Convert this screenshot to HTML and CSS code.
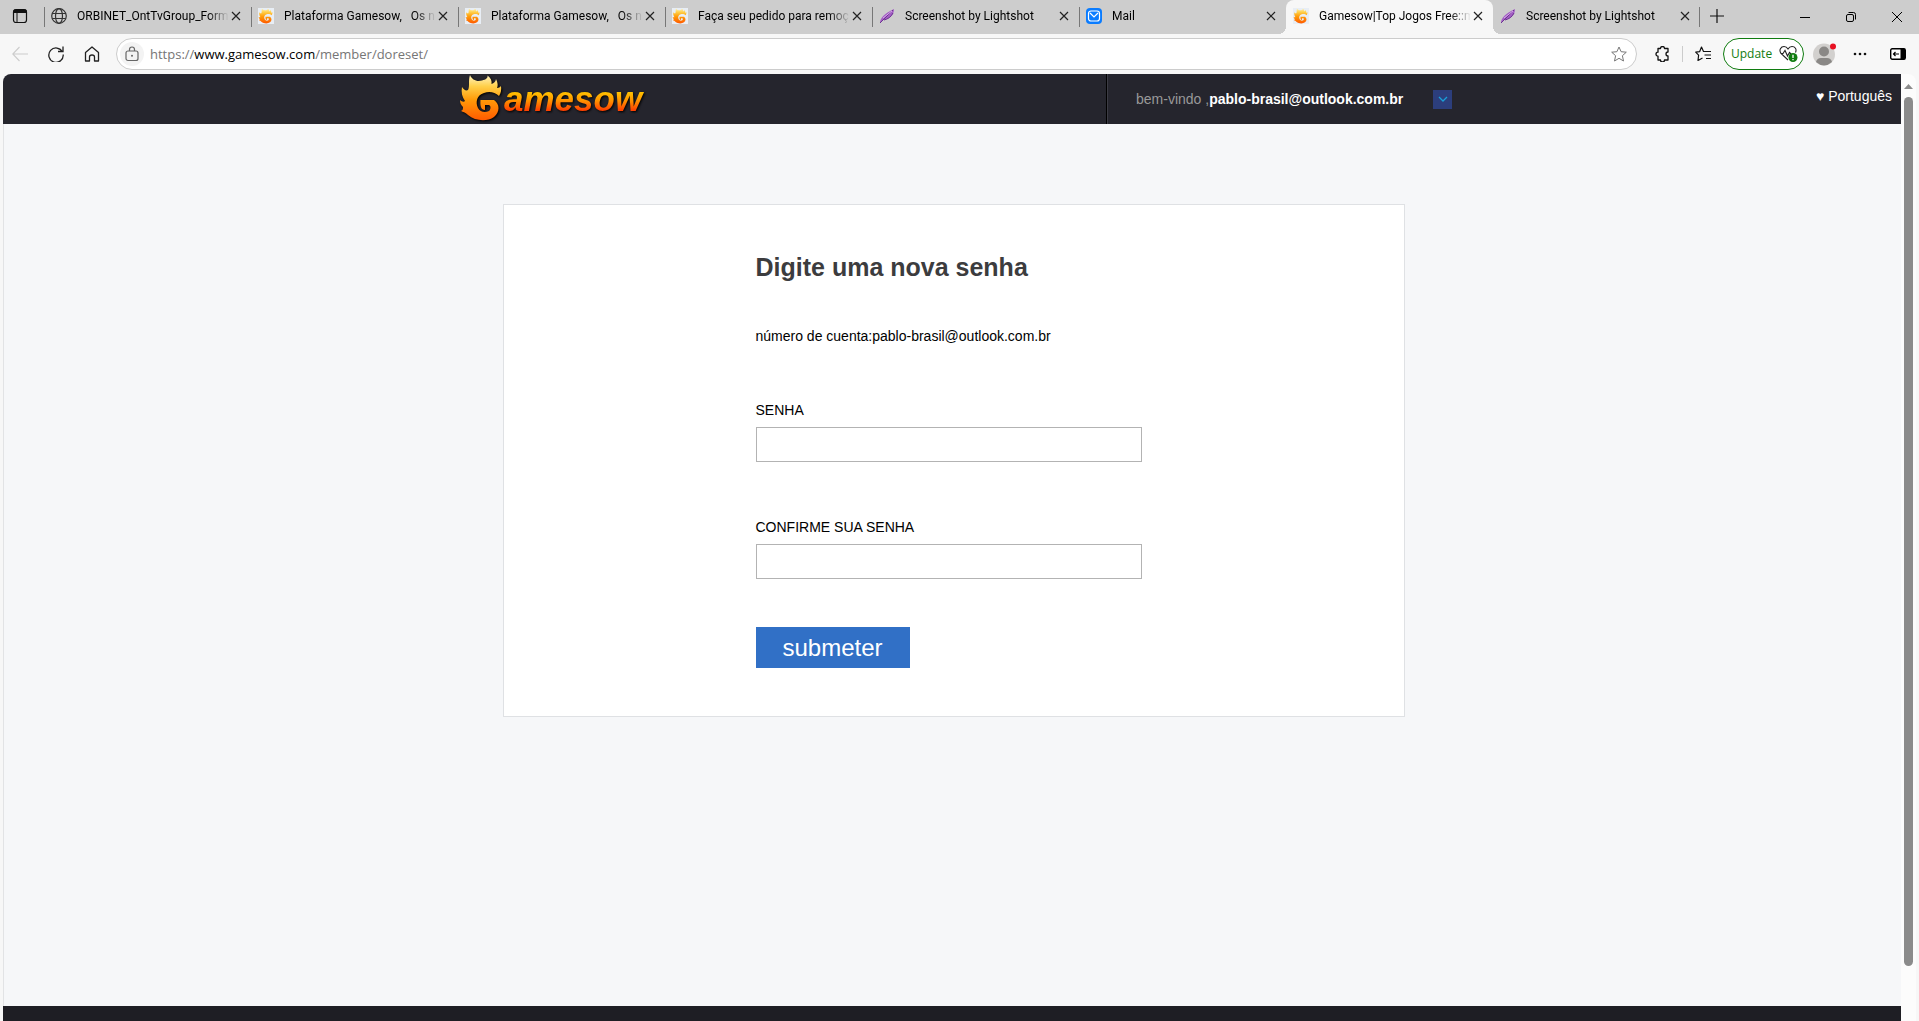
FILE: index.html
```html
<!DOCTYPE html>
<html lang="pt-BR">
<head>
    <meta charset="UTF-8">
    <meta name="viewport" content="width=device-width, initial-scale=1.0">
    <title>Gamesow|Top Jogos Free</title>
    <link rel="stylesheet" href="styles.css">
</head>
<body>
<!-- shared shapes -->
<svg class="defs" width="0" height="0">
    <defs>
        <linearGradient id="fire" x1="0" y1="0" x2="0" y2="1">
            <stop offset="0" stop-color="#fff3c0"/>
            <stop offset="0.25" stop-color="#ffd04a"/>
            <stop offset="0.55" stop-color="#ff9a08"/>
            <stop offset="1" stop-color="#ff5a00"/>
        </linearGradient>
    </defs>
    <symbol id="flame" viewBox="0 0 44 48">
        <path fill="url(#fire)" d="M10 1C12 6 17 8 22 6.500C26 5.500 28 4 27.500 1.500C31 4 32 7 31.500 10C34 9 35.500 8 36 5C38 9 38 12 37 14C39 14 40 13 41 12C41.500 16 41 19 39 22C35 18 29 17 24 19C17 21 15 28 18 34C20 38 25 39 29 37C31 35 31 32 29 31L25 31L25 36C21 36 20 32 20.500 26L34 26C40 30 40 38 34 43C27 48 15 47 8 41C5 38 3 38 1 37C3 36 3 35 3 33C1 31 0 29 0 26C2 28 4 28 5 27C2 23 1 18 2 13C4 16 6 17 8 16C10 12 8 7 10 1Z"/>
    </symbol>
    <symbol id="x" viewBox="0 0 10 10"><path d="M1 1L9 9M9 1L1 9" fill="none" stroke="#222" stroke-width="1.200"/></symbol>
    <symbol id="feather" viewBox="0 0 16 16">
        <path d="M1 15C1 10 5 6 15 1C15 8 10 11 4 12Z" fill="#a35fc4"/>
        <path d="M1 15L14 2M5 12C9 11 12 9 14 5" fill="none" stroke="#6d3391" stroke-width="1"/>
        <path d="M4 10L13 3" stroke="#d7a9ea" stroke-width="1"/>
    </symbol>
</svg>

<div class="tabs">
    <button class="tab-menu" aria-label="Tab actions">
        <svg width="16" height="16" viewBox="0 0 16 16"><rect x="1.500" y="1.500" width="13" height="13" rx="2.500" fill="none" stroke="#111" stroke-width="1.200"/><path d="M2 2H14V4.500H2ZM5 5V14" fill="#111" stroke="#111"/></svg>
    </button>
    <div class="tab">
        <svg class="fav" viewBox="0 0 16 16"><g fill="none" stroke="#333" stroke-width="1.200"><circle cx="8" cy="8" r="7.300"/><ellipse cx="8" cy="8" rx="3.500" ry="7.300"/><path d="M1.300 5.500H14.700M1.300 10.500H14.700"/></g></svg>
        <span class="title">ORBINET_OntTvGroup_Form</span>
        <button class="close" aria-label="Close"><svg><use href="#x"/></svg></button>
    </div>
    <div class="tab">
        <svg class="fav game"><use href="#flame"/></svg>
        <span class="title">Plataforma Gamesow, &nbsp; Os n</span>
        <button class="close" aria-label="Close"><svg><use href="#x"/></svg></button>
    </div>
    <div class="tab">
        <svg class="fav game"><use href="#flame"/></svg>
        <span class="title">Plataforma Gamesow, &nbsp; Os n</span>
        <button class="close" aria-label="Close"><svg><use href="#x"/></svg></button>
    </div>
    <div class="tab">
        <svg class="fav game"><use href="#flame"/></svg>
        <span class="title">Faça seu pedido para remoç</span>
        <button class="close" aria-label="Close"><svg><use href="#x"/></svg></button>
    </div>
    <div class="tab">
        <svg class="fav"><use href="#feather"/></svg>
        <span class="title">Screenshot by Lightshot</span>
        <button class="close" aria-label="Close"><svg><use href="#x"/></svg></button>
    </div>
    <div class="tab">
        <svg class="fav" viewBox="0 0 16 16"><rect width="16" height="16" rx="4" fill="#0a7cff"/><rect x="2.500" y="3" width="11" height="10" rx="2.500" fill="none" stroke="#fff" stroke-width="1.200"/><path d="M4 5L8 9L12 5" fill="none" stroke="#fff" stroke-width="1.200"/></svg>
        <span class="title">Mail</span>
        <button class="close" aria-label="Close"><svg><use href="#x"/></svg></button>
    </div>
    <div class="tab active">
        <svg class="fav game"><use href="#flame"/></svg>
        <span class="title">Gamesow|Top Jogos Free::m</span>
        <button class="close" aria-label="Close"><svg><use href="#x"/></svg></button>
    </div>
    <div class="tab after">
        <svg class="fav"><use href="#feather"/></svg>
        <span class="title">Screenshot by Lightshot</span>
        <button class="close" aria-label="Close"><svg><use href="#x"/></svg></button>
    </div>
    <button class="new-tab" aria-label="New tab"><svg width="14" height="14" viewBox="0 0 14 14"><path d="M7 0V14M0 7H14" stroke="#111" stroke-width="1.200"/></svg></button>
    <div class="window">
        <button aria-label="Minimize"><svg width="10" height="10" viewBox="0 0 10 10"><path d="M0 5.500H10" stroke="#000"/></svg></button>
        <button aria-label="Restore"><svg width="10" height="10" viewBox="0 0 10 10"><g fill="none" stroke="#000"><rect x="0.500" y="2.500" width="7" height="7" rx="1.500"/><path d="M2.500 0.500H7.500Q9.500 0.500 9.500 2.500V7.500"/></g></svg></button>
        <button aria-label="Close window"><svg width="10" height="10" viewBox="0 0 10 10"><path d="M0 0L10 10M10 0L0 10" stroke="#000"/></svg></button>
    </div>
</div>

<div class="toolbar">
    <div class="nav">
        <button aria-label="Back"><svg width="16" height="16" viewBox="0 0 16 16"><path d="M7.500 1L0.800 8L7.500 15M1 8H16" fill="none" stroke="#ccc" stroke-width="1.100"/></svg></button>
        <button aria-label="Refresh"><svg width="16" height="16" viewBox="0 0 16 16"><path d="M14.500 6A7.200 7.200 0 1 0 15.200 8.500M15 0.500V5.500H10" fill="none" stroke="#222" stroke-width="1.300"/></svg></button>
        <button aria-label="Home"><svg width="16" height="16" viewBox="0 0 16 16"><path d="M8 1L14.500 6.500V15H10.500V11Q10.500 9 8 9Q5.500 9 5.500 11V15H1.500V6.500Z" fill="none" stroke="#222" stroke-width="1.300" stroke-linejoin="round"/></svg></button>
    </div>
    <div class="address">
        <button class="lock" aria-label="Site information"><svg width="14" height="16" viewBox="0 0 14 16"><rect x="1" y="5" width="12" height="9.500" rx="2" fill="none" stroke="#666" stroke-width="1.200"/><path d="M4.500 5V3.500A2.500 2.500 0 0 1 9.500 3.500V5" fill="none" stroke="#666" stroke-width="1.200"/><circle cx="7" cy="9.800" r="1" fill="#666"/></svg></button>
        <span class="url">https://<b>www.gamesow.com</b>/member/doreset/</span>
        <button class="star" aria-label="Favorite"><svg width="16" height="16" viewBox="0 0 16 16"><path d="M8 1L10.100 5.700L15.300 6.200L11.400 9.700L12.500 15L8 12.300L3.500 15L4.600 9.700L0.700 6.200L5.900 5.700Z" fill="none" stroke="#777" stroke-linejoin="round"/></svg></button>
    </div>
    <div class="tools">
        <button class="ext" aria-label="Extensions"><svg width="16" height="16" viewBox="0 0 16 16"><path d="M4 2.500H6.500A2 2 0 0 1 10.500 2.500H14V6A1.900 1.900 0 1 0 14 10V14H10.500A2 2 0 0 1 6.500 14H4V10.200A2 2 0 0 1 4 6.200Z" fill="none" stroke="#111" stroke-width="1.300" stroke-linejoin="round"/></svg></button>
        <span class="line"></span>
        <button class="favs" aria-label="Favorites"><svg width="16" height="16" viewBox="0 0 16 16"><path d="M10 5.500L8.500 5.500L6.500 1L4.600 5.700L0.700 6.200L3.600 9.200L3 14.500L7.500 12M9.500 5.500H16M9.500 9H16M11 12.500H16" fill="none" stroke="#111" stroke-width="1.200" stroke-linejoin="round"/></svg></button>
        <button class="update">Update
            <svg width="20" height="18" viewBox="0 0 20 18"><path d="M9 15L2 8.500C-0.500 5 2 1.500 5 1.500Q7.500 1.500 9 4Q10.500 1.500 13 1.500C16 1.500 18 4 16.500 7.500M1.500 8.500H4L6 5.500L8.500 11L10.500 7.500L12 9" fill="none" stroke="#222" stroke-width="1.100"/><circle cx="14" cy="12.500" r="4.500" fill="#107c10"/><path d="M14 9.800V13M14 14V15.200" stroke="#fff" stroke-width="1.300"/></svg>
        </button>
        <button class="avatar" aria-label="Profile"><svg width="24" height="24" viewBox="0 0 24 24"><circle cx="12" cy="12.500" r="11" fill="#d2d0ce"/><circle cx="12" cy="9.500" r="5" fill="#8a8886"/><path d="M4 20Q5 16 9 16H15Q19 16 20 20Q12 27 4 20Z" fill="#8a8886"/><circle cx="21" cy="4.500" r="3" fill="#e81123"/></svg></button>
        <button class="more" aria-label="More"><svg width="14" height="4" viewBox="0 0 14 4"><g fill="#111"><circle cx="2" cy="2" r="1.300"/><circle cx="7" cy="2" r="1.300"/><circle cx="12" cy="2" r="1.300"/></g></svg></button>
        <button class="side" aria-label="Sidebar"><svg width="16" height="12" viewBox="0 0 16 12"><rect x="0.700" y="0.700" width="14.600" height="10.600" rx="1.500" fill="#fff" stroke="#000" stroke-width="1.400"/><path d="M10.500 0.700H15V11.300H10.500Z" fill="#000"/><path d="M9 6H3.500M5.500 4L3.500 6L5.500 8" fill="none" stroke="#000" stroke-width="1.200"/></svg></button>
    </div>
</div>

<div class="view">
    <div class="page">
        <div class="header">
            <div class="header-in">
                <a class="logo" href="javascript:;"><svg width="44" height="48"><use href="#flame"/></svg><span>amesow</span></a>
                <div class="user">
                    <span>bem-vindo ,</span><b>pablo-brasil@outlook.com.br</b>
                    <button class="arrow" aria-label="Menu"><svg width="10" height="6" viewBox="0 0 10 6"><path d="M1 1L5 5L9 1" fill="none" stroke="#1aa0d8" stroke-width="1.300"/></svg></button>
                </div>
            </div>
            <button class="lang">♥ Português</button>
        </div>
        <div class="main">
            <form class="box">
                <h2>Digite uma nova senha</h2>
                <p>número de cuenta:pablo-brasil@outlook.com.br</p>
                <label for="pwd">SENHA</label>
                <input type="password" id="pwd">
                <label for="pwd2">CONFIRME SUA SENHA</label>
                <input type="password" id="pwd2">
                <button class="submit" type="button">submeter</button>
            </form>
        </div>
        <div class="footer"></div>
    </div>
    <div class="scroll">
        <svg width="9" height="5" viewBox="0 0 9 5"><path d="M4.500 0L9 5H0Z" fill="#8b8b8b"/></svg>
        <div class="thumb"></div>
    </div>
</div>
</body>
</html>
```

FILE: styles.css
```css
*{
    margin: 0;
    padding: 0;
    box-sizing: border-box;
}
body{
    height: 100vh;
    display: flex;
    flex-direction: column;
    overflow: hidden;
    background: #f7f7f7;
    font-family: "Liberation Sans", Arial, sans-serif;
    font-size: 14px;
    color: #000;
}
button{
    border: 0;
    background: none;
    font: inherit;
    color: inherit;
}
svg{
    display: block;
    flex: none;
}
.defs{
    position: absolute;
}

/* tabs */
.tabs{
    height: 34px;
    flex: none;
    display: flex;
    background: #cdcdcd;
    font-family: Roboto, "Open Sans", sans-serif;
    font-size: 12px;
}
.tab-menu{
    width: 44px;
    padding: 0 0 2px 12px;
    flex: none;
}
.tab{
    flex: 0 1 207px;
    min-width: 0;
    display: flex;
    align-items: center;
    padding: 0 10px 2px 7px;
    position: relative;
    background: linear-gradient(#777,#777) no-repeat 0 7px / 1px 20px;
}
.fav{
    width: 16px;
    height: 16px;
    margin-right: 10px;
}
.fav.game{
    background: #e8eef5;
}
.title{
    flex: 1;
    min-width: 0;
    white-space: nowrap;
    line-height: 20px;
    -webkit-mask-image: linear-gradient(to right, #000 86%, transparent);
    mask-image: linear-gradient(to right, #000 86%, transparent);
}
.close{
    width: 10px;
    margin-left: 2px;
}
.close svg{
    width: 10px;
    height: 10px;
}
.tab.active{
    background: #f7f7f7;
    border-radius: 8px 8px 0 0;
}
.tab.active::before,
.tab.active::after{
    content: "";
    position: absolute;
    bottom: 0;
    width: 8px;
    height: 8px;
}
.tab.active::before{
    left: -8px;
    background: radial-gradient(circle at 0 0, transparent 8px, #f7f7f7 8px);
}
.tab.active::after{
    right: -8px;
    background: radial-gradient(circle at 100% 0, transparent 8px, #f7f7f7 8px);
}
.tab.after{
    background: linear-gradient(#777,#777) no-repeat 100% 7px / 1px 20px;
}
.new-tab{
    padding: 0 10px 2px;
}
.window{
    margin-left: auto;
    display: flex;
}
.window button{
    width: 46px;
    padding-left: 19px;
}

/* toolbar */
.toolbar{
    height: 40px;
    flex: none;
    display: flex;
    align-items: center;
    padding: 0 13px 1px 12px;
    font-family: "Open Sans", "Noto Sans", sans-serif;
    font-size: 13px;
}
.nav{
    display: flex;
    gap: 20px;
    margin-right: 16px;
}
.address{
    flex: 1;
    height: 32px;
    display: flex;
    align-items: center;
    padding: 0 9px 0 3px;
    border: 1px solid #ccc;
    border-radius: 16px;
    background: #fff;
}
.lock{
    width: 24px;
    height: 24px;
    padding-left: 5px;
    border-radius: 50%;
    background: #f3f3f3;
}
.url{
    margin-left: 6px;
    color: #767676;
}
.url b{
    font-weight: normal;
    color: #000;
}
.star{
    margin-left: auto;
}
.tools{
    display: flex;
    align-items: center;
}
.ext{
    margin-left: 17px;
}
.line{
    width: 1px;
    height: 16px;
    margin: 0 12px;
    background: #ccc;
}
.update{
    display: flex;
    align-items: center;
    justify-content: space-between;
    width: 81px;
    height: 32px;
    margin-left: 12px;
    padding: 0 4px 0 7px;
    border: 1px solid #107c10;
    border-radius: 16px;
    background: #fff;
    font-size: 12px;
    color: #107c10;
}
.avatar{
    margin: 0 17px 0 8px;
}
.more{
    margin-right: 23px;
}

/* page */
.view{
    flex: 1;
    min-height: 0;
    display: flex;
    margin: 0 3px;
    border-radius: 8px 8px 0 0;
    overflow: hidden;
    background: #fcfcfc;
}
.page{
    flex: 1;
    display: flex;
    flex-direction: column;
    background: #f6f7f9;
    border-left: 1px solid #e2e3e5;
}
.header{
    height: 50px;
    display: grid;
    grid-template-columns: 1fr minmax(0, 1000px) 1fr;
    margin-left: -1px;
    background: #25252d;
}
.header-in{
    grid-column: 2;
    display: flex;
    justify-content: space-between;
}
.logo{
    display: flex;
    padding-left: 8px;
    text-decoration: none;
    filter: drop-shadow(1px 1px 1px #000);
}
.logo span{
    font-size: 35px;
    font-weight: bold;
    font-style: italic;
    line-height: 50px;
    padding-right: 4px;
    background: linear-gradient(#ffc400 36%, #ff9000 54%, #ff4200 72%);
    -webkit-background-clip: text;
    background-clip: text;
    color: transparent;
}
.user{
    display: flex;
    align-items: center;
    width: 346px;
    padding-left: 29px;
    border-left: 1px solid #000;
    box-shadow: inset 1px 0 #3c3c44;
    color: #999;
}
.user b{
    color: #fff;
}
.arrow{
    width: 19px;
    height: 19px;
    margin-left: auto;
    padding-left: 5px;
    background: #2c3e7c;
}
.lang{
    justify-self: end;
    align-self: start;
    padding: 14px 9px 0 0;
    color: #fff;
}
.main{
    flex: 1;
    width: 100%;
    max-width: 1000px;
    margin: 0 auto;
    padding: 80px 48px 0 50px;
}
.box{
    display: flex;
    flex-direction: column;
    align-items: flex-start;
    padding: 46px 250px 48px 252px;
    border: 1px solid #dfe1e4;
    background: #fff;
}
.box h2{
    font-size: 25px;
    line-height: 32px;
    color: #3c3c3e;
}
.box p{
    margin: 41px 0 50px;
    line-height: 24px;
}
.box label{
    line-height: 24px;
    margin-bottom: 5px;
}
.box input{
    width: 100%;
    max-width: 386px;
    height: 35px;
    padding: 0 8px;
    margin-bottom: 53px;
    border: 1px solid #b3b3b3;
    font-size: 14px;
}
.submit{
    width: 154px;
    height: 41px;
    background: #3170c6;
    color: #fff;
    font-size: 24px;
}
.box input + .submit{
    margin-top: -5px;
}
.footer{
    height: 15px;
    margin-left: -1px;
    background: #1e1e24;
}
.scroll{
    width: 15px;
    display: flex;
    flex-direction: column;
    align-items: center;
    padding: 10px 0 55px;
}
.thumb{
    flex: 1;
    width: 9px;
    margin-top: 8px;
    border-radius: 5px;
    background: #8b8b8b;
}
```
